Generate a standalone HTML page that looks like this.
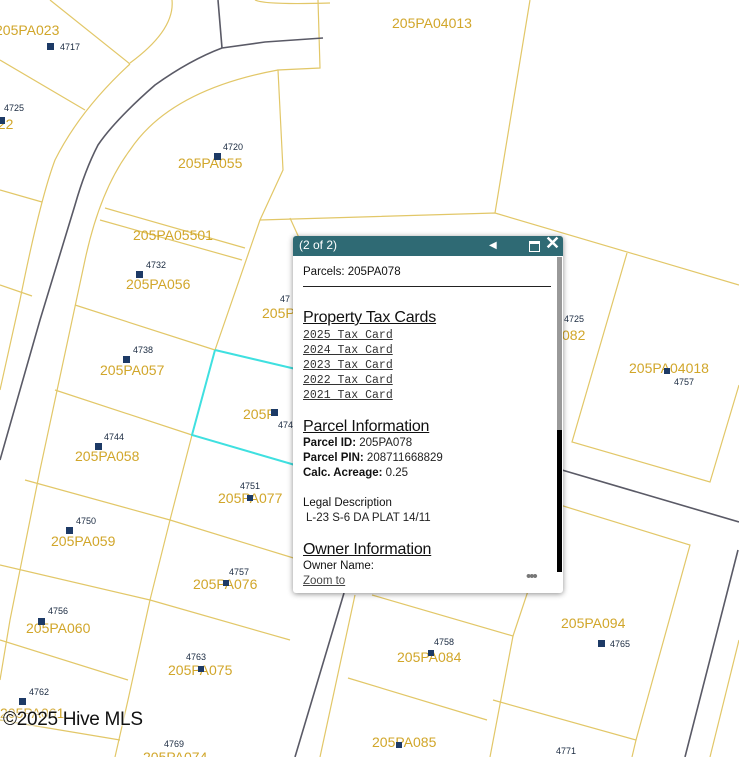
<!DOCTYPE html>
<html><head><meta charset="utf-8"><style>
body{margin:0;width:739px;height:757px;overflow:hidden;background:#fff;position:relative;font-family:"Liberation Sans",sans-serif}
svg{position:absolute;left:0;top:0}
.lb{font:14px "Liberation Sans",sans-serif;fill:#d1a62a}
.n{font:9px "Liberation Sans",sans-serif;fill:#1a2a40}
#pop{position:absolute;left:293px;top:236px;width:270px;height:357px;background:#fff;box-shadow:0 1px 6px rgba(0,0,0,.45);border-radius:3px;overflow:hidden;color:#222}
#hd{height:20px;background:#2f6a74;color:#fff;font-size:12px;line-height:19px;padding-left:6px;position:relative}
.p{position:absolute;left:10px;white-space:nowrap}
.h{font-size:16px;text-decoration:underline;font-weight:normal;letter-spacing:-.2px;color:#111}
.mono{font:11.5px "Liberation Mono",monospace;text-decoration:underline;color:#333}
.t{font-size:11.5px}
b{font-weight:bold;color:#111}
#wm{position:absolute;left:3px;top:709px;font-size:19px;color:#111;letter-spacing:-.3px;text-shadow:0 0 2px #fff,0 0 2px #fff,0 0 3px #fff}
</style></head><body>
<svg width="739" height="757">
<g stroke="#e2c768" stroke-width="1.2" fill="none">
<path d="M130,63 Q175,30 172,0"/>
<path d="M255,0 Q265,5 330,3"/>
<path d="M50,0 L130,64"/>
<path d="M0,60 L85,110"/>
<path d="M318,0 L320,68 L278,70 L283,170 L260,220 L215,350 L192,435 L170,520 L150,600 L128,700 L115,757"/>
<path d="M278,70 Q170,90 130,150 Q100,190 85,260 L40,470 L10,620 L0,680"/>
<path d="M130,64 Q80,110 55,160 Q40,200 20,300 L0,390"/>
<path d="M0,190 L42,202"/>
<path d="M0,285 L32,296"/>
<path d="M105,208 L245,248"/>
<path d="M100,220 L242,260"/>
<path d="M260,220 L495,213 L739,285"/>
<path d="M530,0 L495,213"/>
<path d="M290,218 L300,240"/>
<path d="M75,305 L215,350"/>
<path d="M55,390 L192,435"/>
<path d="M25,480 L170,520"/>
<path d="M0,565 L150,600"/>
<path d="M0,640 L128,680"/>
<path d="M0,720 L120,740"/>
<path d="M627,253 L572,442 L710,482 L739,385"/>
<path d="M170,520 L300,560"/>
<path d="M150,600 L290,640"/>
<path d="M355,595 L320,757"/>
<path d="M372,595 L513,636 L490,757"/>
<path d="M348,678 L487,720"/>
<path d="M493,700 L636,740 L632,757"/>
<path d="M560,505 L690,545 L636,740"/>
<path d="M545,540 L513,636"/>
<path d="M739,640 L710,757"/>
</g>
<g stroke="#5a5a66" stroke-width="1.6" fill="none">
<path d="M323,38 L265,42 L222,48 Q190,60 155,85 Q115,120 98,145 Q85,170 75,205 L40,320 L0,460"/>
<path d="M218,0 L222,48"/>
<path d="M562,470 L739,522"/>
<path d="M344,593 L295,757"/>
<path d="M738,550 L685,757"/>
</g>
<path d="M215,350 L300,370 M215,350 L192,435 L295,465" stroke="#3fe0e0" stroke-width="2" fill="none"/>
<g class="lb">
<text x="-5" y="35">205PA023</text><text x="392" y="28">205PA04013</text>
<text x="-10" y="129">022</text><text x="178" y="168">205PA055</text>
<text x="133" y="240">205PA05501</text><text x="126" y="289">205PA056</text>
<text x="262" y="318">205P</text><text x="100" y="375">205PA057</text>
<text x="243" y="419">205P</text><text x="75" y="461">205PA058</text>
<text x="218" y="503">205PA077</text><text x="51" y="546">205PA059</text>
<text x="193" y="589">205PA076</text><text x="26" y="633">205PA060</text>
<text x="168" y="675">205PA075</text><text x="397" y="662">205PA084</text>
<text x="561" y="628">205PA094</text><text x="629" y="373">205PA04018</text>
<text x="562" y="340">082</text><text x="372" y="747">205PA085</text>
<text x="0" y="718">205PA061</text><text x="143" y="762">205PA074</text>
</g>
<g fill="#1d3a66">
<rect x="47" y="43" width="7" height="7"/><rect x="214" y="153" width="7" height="7"/><rect x="136" y="271" width="7" height="7"/>
<rect x="123" y="356" width="7" height="7"/><rect x="95" y="443" width="7" height="7"/><rect x="66" y="527" width="7" height="7"/>
<rect x="38" y="618" width="7" height="7"/><rect x="19" y="698" width="7" height="7"/><rect x="598" y="640" width="7" height="7"/>
<rect x="0" y="117" width="5" height="7"/><rect x="271" y="409" width="7" height="7"/><rect x="247" y="495" width="6" height="6"/>
<rect x="223" y="580" width="6" height="6"/><rect x="198" y="666" width="6" height="6"/><rect x="428" y="650" width="6" height="6"/>
<rect x="396" y="742" width="6" height="6"/><rect x="664" y="368" width="6" height="6"/>
</g>
<g class="n">
<text x="60" y="50">4717</text><text x="4" y="111">4725</text><text x="223" y="150">4720</text><text x="146" y="268">4732</text>
<text x="133" y="353">4738</text><text x="104" y="440">4744</text><text x="76" y="524">4750</text><text x="48" y="614">4756</text>
<text x="29" y="695">4762</text><text x="280" y="302">47</text><text x="564" y="322">4725</text><text x="674" y="385">4757</text>
<text x="240" y="489">4751</text><text x="229" y="575">4757</text><text x="186" y="660">4763</text><text x="434" y="645">4758</text>
<text x="610" y="647">4765</text><text x="556" y="754">4771</text><text x="164" y="747">4769</text><text x="278" y="428">474</text>
</g>
</svg>
<div id="pop">
<div id="hd">(2 of 2)<span style="position:absolute;left:196px;top:0;font-size:10px">◀</span>
<span style="position:absolute;left:236px;top:5px;width:9px;height:7px;border:1.5px solid #fff;border-top-width:3px"></span>
<span style="position:absolute;left:252px;top:-2px;font-size:18px;font-weight:bold">✕</span></div>
<div class="p t" style="top:30px;color:#111">Parcels: 205PA078</div>
<div style="position:absolute;left:10px;top:50px;width:248px;border-top:1.2px solid #222"></div>
<div class="p h" style="top:73px">Property Tax Cards</div>
<div class="p mono" style="top:93px">2025 Tax Card</div>
<div class="p mono" style="top:108px">2024 Tax Card</div>
<div class="p mono" style="top:123px">2023 Tax Card</div>
<div class="p mono" style="top:138px">2022 Tax Card</div>
<div class="p mono" style="top:153px">2021 Tax Card</div>
<div class="p h" style="top:182px">Parcel Information</div>
<div class="p t" style="top:201px"><b>Parcel ID:</b> 205PA078</div>
<div class="p t" style="top:216px"><b>Parcel PIN:</b> 208711668829</div>
<div class="p t" style="top:231px"><b>Calc. Acreage:</b> 0.25</div>
<div class="p t" style="top:261px;color:#111">Legal Description</div>
<div class="p t" style="top:276px;left:13px">L-23 S-6 DA PLAT 14/11</div>
<div class="p h" style="top:305px">Owner Information</div>
<div class="p t" style="top:324px;color:#111">Owner Name:</div>
<div class="p t" style="top:339px;text-decoration:underline;color:#444">Zoom to</div>
<div class="p" style="left:233px;top:336px;font-size:15px;line-height:10px;color:#777;letter-spacing:-2px">•••</div>
<div style="position:absolute;left:264px;top:21px;width:5px;height:173px;background:#999"></div>
<div style="position:absolute;left:264px;top:194px;width:5px;height:142px;background:#000"></div>
</div>
<div id="wm">©2025 Hive MLS</div>
</body></html>
